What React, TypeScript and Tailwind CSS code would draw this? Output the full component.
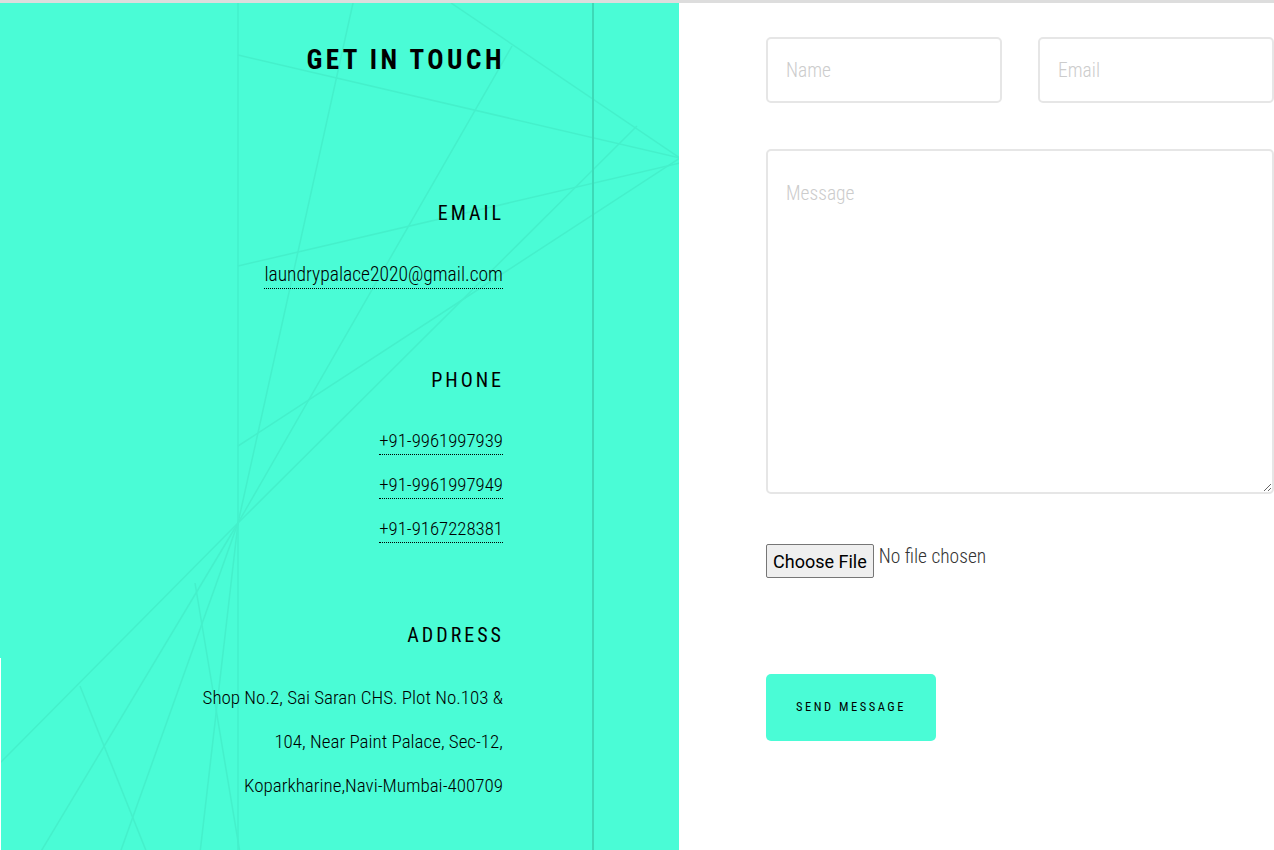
import React from "react";

function BgLines() {
  const lines: [number, number, number, number][] = [
    [238, 0, 238, 850],
    [451, 0, 680, 155],
    [238, 52, 680, 155],
    [238, 443, 680, 155],
    [238, 263, 680, 160],
    [512, 43, 238, 520],
    [353, 0, 238, 520],
    [637, 123, 238, 520],
    [238, 520, 40, 850],
    [238, 520, 120, 850],
    [238, 520, 200, 850],
    [238, 520, 0, 760],
    [80, 683, 147, 850],
    [195, 580, 240, 850],
  ];
  return (
    <svg className="absolute inset-0 pointer-events-none" width="680" height="850" viewBox="0 0 680 850">
      {lines.map((l, i) => (
        <line key={i} x1={l[0]} y1={l[1]} x2={l[2]} y2={l[3]} stroke="#45f0cb" strokeWidth="1.5" />
      ))}
    </svg>
  );
}

const linkCls = "leading-[22px] border-b border-dotted border-black pb-[2px] text-black";
const labelCls = "text-[20px] font-normal tracking-[3px] leading-[24px] mr-[-1px]";
const fieldCls =
  "border-2 border-[#e6e6e6] rounded-[5px] px-[18px] text-[19.5px] font-light [font-stretch:condensed] font-['Roboto',sans-serif] text-[#333] placeholder:text-[#cccccc] outline-none";

export default function App() {
  return (
    <div className="w-[1274px] h-[850px] overflow-hidden bg-white flex flex-col font-['Roboto',sans-serif] [font-stretch:condensed] font-light">
      <div className="h-[3px] bg-[#dddddd] shrink-0" />
      <div className="flex flex-1">
        <div className="relative w-[679px] h-full bg-[#4afcd6] shrink-0 overflow-hidden">
          <BgLines />
          <div className="absolute left-[592px] top-0 bottom-0 w-[2px] bg-[#3dd9b7]" />
          <div className="absolute left-0 top-[655px] bottom-0 w-[1px] bg-white" />
          <div className="relative flex flex-col items-end pr-[176px] pt-[39px] text-black">
            <h2 className="text-[27px] font-bold tracking-[3.5px] leading-[36px] mr-[-2px]">GET IN TOUCH</h2>
            <div className={"mt-[123px] " + labelCls}>EMAIL</div>
            <a className={"mt-[39px] text-[19.5px] " + linkCls}>laundrypalace2020@gmail.com</a>
            <div className={"mt-[79px] " + labelCls}>PHONE</div>
            <a className={"mt-[38px] text-[18.8px] " + linkCls}>+91-9961997939</a>
            <a className={"mt-[19px] text-[18.8px] " + linkCls}>+91-9961997949</a>
            <a className={"mt-[19px] text-[18.8px] " + linkCls}>+91-9167228381</a>
            <div className={"mt-[80px] " + labelCls}>ADDRESS</div>
            <p className="mt-[29px] text-[19px] leading-[44px] text-right">
              Shop No.2, Sai Saran CHS. Plot No.103 &amp;
              <br />
              104, Near Paint Palace, Sec-12,
              <br />
              Koparkharine,Navi-Mumbai-400709
            </p>
          </div>
        </div>
        <div className="flex-1 pl-[87px] pt-[34px]">
          <div className="w-[508px] flex flex-col">
            <div className="flex gap-[36px]">
              <input placeholder="Name" className={"w-[236px] h-[66px] " + fieldCls} />
              <input placeholder="Email" className={"w-[236px] h-[66px] " + fieldCls} />
            </div>
            <textarea placeholder="Message" className={"mt-[46px] w-[508px] h-[345px] pt-[28px] " + fieldCls} />
            <div className="mt-[50px] flex items-start">
              <button className="h-[34px] px-[6px] border border-[#767676] rounded-[2px] bg-[#efefef] text-[18px] font-normal [font-stretch:normal] text-black font-['Roboto',Arial,sans-serif]">
                Choose File
              </button>
              <span className="ml-[5px] text-[19.5px] text-[#333] leading-[26px]">No file chosen</span>
            </div>
            <button className="mt-[96px] w-[170px] h-[67px] rounded-[5px] bg-[#4afcd6] text-[12.5px] font-normal tracking-[2.5px] text-black">
              SEND MESSAGE
            </button>
          </div>
        </div>
      </div>
    </div>
  );
}
